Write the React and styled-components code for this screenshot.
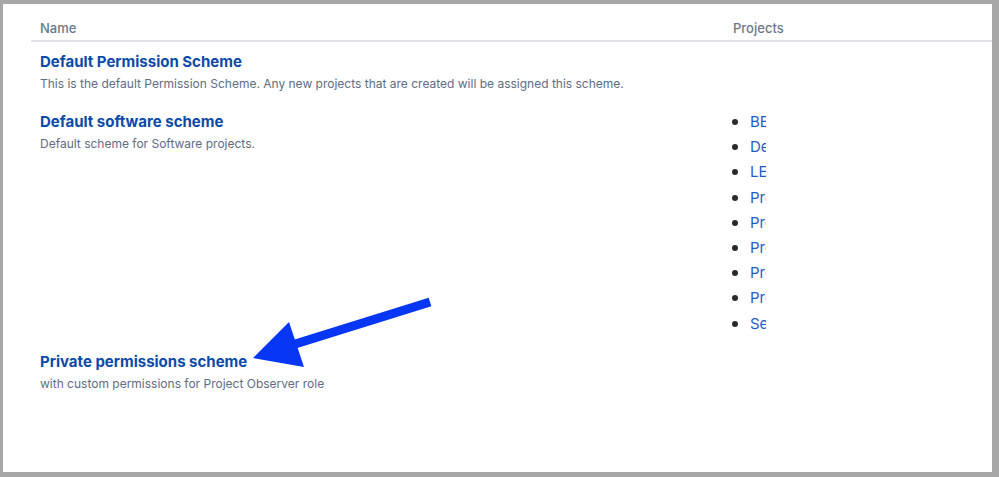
import React from "react";
import styled, { createGlobalStyle } from "styled-components";

const Global = createGlobalStyle`
  html, body { margin: 0; padding: 0; }
  body {
    background: #a7a7a7;
    font-family: Inter, "Noto Sans", "Liberation Sans", sans-serif;
    -webkit-font-smoothing: antialiased;
  }
`;

const Page = styled.div`
  position: relative;
  width: 999px;
  height: 477px;
  box-sizing: border-box;
  padding: 4px 7px 5px 3px;
`;

const Frame = styled.div`
  height: 100%;
  background: #ffffff;
  box-sizing: border-box;
  padding: 12px 0 0 28px;
  overflow: hidden;
`;

const Table = styled.div`
  display: grid;
  grid-template-columns: 693px 1fr;
`;

const HeadCell = styled.div`
  padding: 4px 8px 4px 9px;
  font-size: 13px;
  line-height: 16px;
  font-weight: 500;
  color: #6b778c;
  border-bottom: 2px solid #dfe1e6;
`;

const Cell = styled.div`
  padding: 10px 8px 8px 9px;
  min-width: 0;
`;

const Title = styled.a`
  display: block;
  font-size: 15px;
  line-height: 20px;
  font-weight: 700;
  color: #0b4aa8;
  text-decoration: none;
`;

const Desc = styled.div`
  margin-top: 2px;
  font-size: 12px;
  line-height: 20px;
  color: #5e6c84;
`;

const List = styled.ul`
  margin: -1px 0 1px 0;
  padding: 0 0 0 17px;
  width: 15px;
`;

const Item = styled.li`
  height: 20px;
  font-size: 15px;
  line-height: 20px;
  color: #222;
  white-space: nowrap;
  & + & { margin-top: 5.2px; }
  &::marker { color: #2a2a2a; font-size: 18px; }
`;

const ItemLink = styled.a`
  display: inline-block;
  width: 16px;
  overflow: hidden;
  vertical-align: top;
  font-size: 15px;
  color: #1f5cc4;
  text-decoration: none;
`;

const Arrow = styled.svg`
  position: absolute;
  left: 0;
  top: 0;
  pointer-events: none;
`;

const schemes = [
  {
    name: "Default Permission Scheme",
    desc: "This is the default Permission Scheme. Any new projects that are created will be assigned this scheme.",
    projects: [],
  },
  {
    name: "Default software scheme",
    desc: "Default scheme for Software projects.",
    projects: [
      "BETA",
      "Demo",
      "LEGAL",
      "Project A",
      "Project B",
      "Project C",
      "Project D",
      "Project E",
      "Service",
    ],
  },
  {
    name: "Private permissions scheme",
    desc: "with custom permissions for Project Observer role",
    projects: [],
  },
];

export default function App() {
  return (
    <>
      <Global />
      <Page>
        <Frame>
          <Table>
            <HeadCell>Name</HeadCell>
            <HeadCell>Projects</HeadCell>
            {schemes.map((s) => (
              <React.Fragment key={s.name}>
                <Cell>
                  <Title href="#">{s.name}</Title>
                  <Desc>{s.desc}</Desc>
                </Cell>
                <Cell>
                  {s.projects.length > 0 && (
                    <List>
                      {s.projects.map((p, i) => (
                        <Item key={i}>
                          <ItemLink href="#">{p}</ItemLink>
                        </Item>
                      ))}
                    </List>
                  )}
                </Cell>
              </React.Fragment>
            ))}
          </Table>
        </Frame>
        <Arrow width="999" height="477" viewBox="0 0 999 477">
          <line x1="430" y1="302" x2="292" y2="345" stroke="#0836f5" strokeWidth="9" />
          <polygon points="253,358 289,322 304,367" fill="#0836f5" />
        </Arrow>
      </Page>
    </>
  );
}
